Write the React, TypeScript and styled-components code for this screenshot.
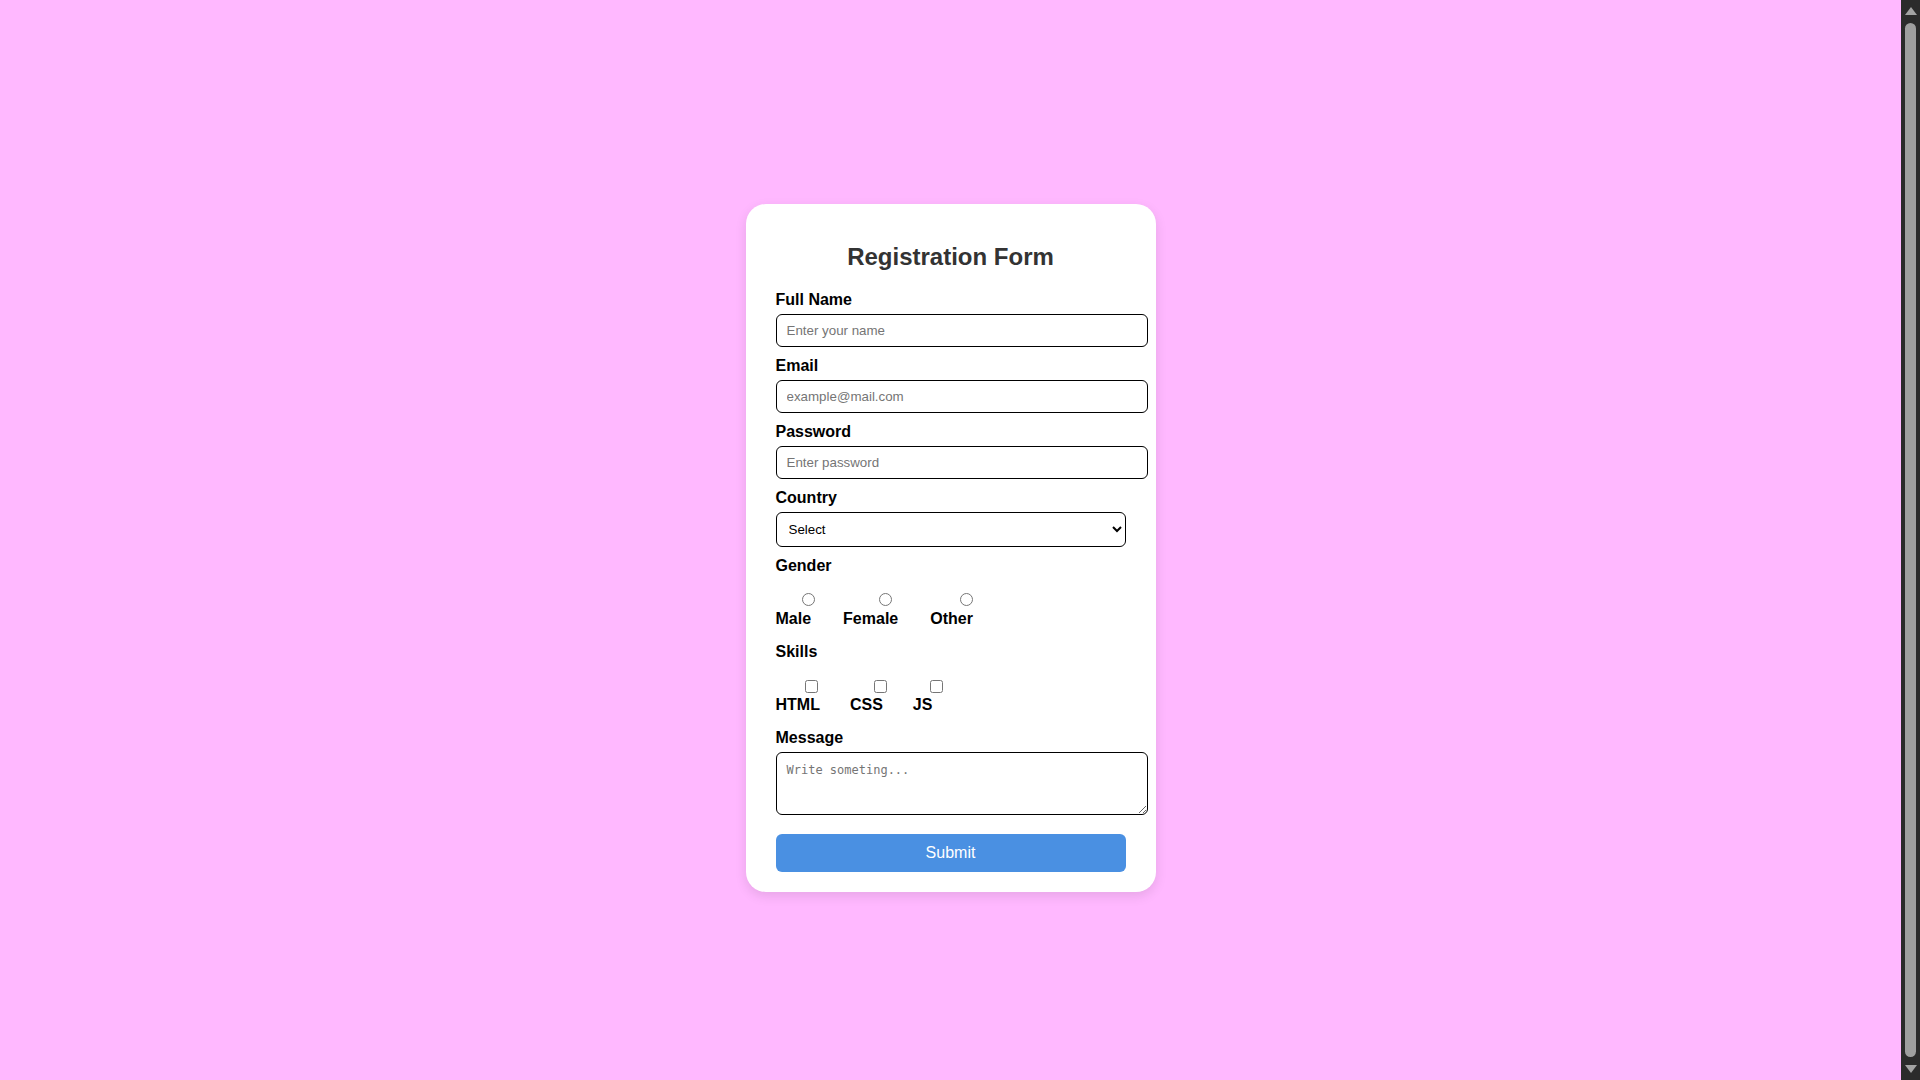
import { createGlobalStyle, styled } from 'styled-components'

const GlobalStyle = createGlobalStyle`
  body {
    margin: 8px 27px 8px 8px;
    height: 100vh;
    display: flex;
    align-items: center;
    justify-content: center;
    background: #ffb8ff;
    font-family: 'Liberation Sans', Arial, sans-serif;
  }
`

// page scrollbar as seen in the screenshot (body is 100vh + margins, so it overflows)
const ScrollTrack = styled.div`
  position: fixed;
  top: 0;
  right: 0;
  width: 19px;
  height: 100vh;
  display: flex;
  flex-direction: column;
  align-items: center;
  background: #2b2b2b;
`

const ScrollArrow = styled.svg`
  flex: none;
  width: 12px;
  height: 8px;
  margin: 7px 0;
`

const ScrollThumb = styled.div`
  flex: 1;
  width: 11px;
  margin: 1px 0;
  border-radius: 6px;
  background: #9f9f9f;
`

const Card = styled.form`
  width: 350px;
  padding: 20px 30px;
  background: #fff;
  border-radius: 20px;
  box-shadow: 0 4px 12px rgba(0, 0, 0, 0.1);
`

const Title = styled.h2`
  margin: 19px 0 20px;
  text-align: center;
  font-size: 24px;
  font-weight: bold;
  color: #333;
`

const FieldLabel = styled.label`
  display: block;
  margin-top: 10px;
  font-size: 16px;
  font-weight: bold;
  color: #000;
`

const TextInput = styled.input`
  display: block;
  box-sizing: content-box;
  width: 100%;
  margin: 5px 0 0;
  padding: 8px 10px;
  border: 1px solid #000;
  border-radius: 6px;
  font-family: 'Liberation Sans', Arial, sans-serif;
  font-size: 13.33px;
  color: #000;
  background: #fff;
  outline: none;
`

const Select = styled.select`
  display: block;
  box-sizing: border-box;
  width: 100%;
  margin: 5px 0 0;
  padding: 8px;
  border: 1px solid #000;
  border-radius: 6px;
  font-family: 'Liberation Sans', Arial, sans-serif;
  font-size: 13.33px;
  color: #000;
  background: #fff;
`

const OptionGroup = styled.div<{ $gap: number }>`
  display: flex;
  gap: ${({ $gap }) => $gap}px;
  padding-bottom: 5px;
`

const Option = styled.label`
  display: flex;
  flex-direction: column;
  align-items: flex-start;
  font-size: 16px;
  font-weight: bold;
  color: #000;
`

const Choice = styled.input<{ $shift: number; $top: number; $bottom: number }>`
  align-self: center;
  width: 13px;
  height: 13px;
  margin: ${({ $top }) => $top}px ${({ $shift }) => -$shift}px ${({ $bottom }) => $bottom}px
    ${({ $shift }) => $shift}px;
`

const MessageArea = styled.textarea`
  display: block;
  box-sizing: content-box;
  width: 100%;
  height: 41px;
  margin: 5px 0 0;
  padding: 10px;
  border: 1px solid #000;
  border-radius: 6px;
  font-family: 'DejaVu Sans Mono', monospace;
  font-size: 12px;
  color: #000;
  background: #fff;
  outline: none;
`

const SubmitButton = styled.button`
  display: block;
  width: 100%;
  margin-top: 18.5px;
  padding: 10px;
  border: none;
  border-radius: 6px;
  background: #4a90e2;
  color: #fff;
  font-family: 'Liberation Sans', Arial, sans-serif;
  font-size: 16px;
  cursor: pointer;
`

const genders = ['Male', 'Female', 'Other']
const skills = ['HTML', 'CSS', 'JS']

export default function App() {
  return (
    <>
      <GlobalStyle />
      <Card onSubmit={(e) => e.preventDefault()}>
        <Title>Registration Form</Title>

        <FieldLabel htmlFor="name">Full Name</FieldLabel>
        <TextInput id="name" type="text" placeholder="Enter your name" />

        <FieldLabel htmlFor="email">Email</FieldLabel>
        <TextInput id="email" type="email" placeholder="example@mail.com" />

        <FieldLabel htmlFor="password">Password</FieldLabel>
        <TextInput id="password" type="password" placeholder="Enter password" />

        <FieldLabel htmlFor="country">Country</FieldLabel>
        <Select id="country" defaultValue="">
          <option value="">Select</option>
          <option value="in">India</option>
          <option value="us">USA</option>
          <option value="uk">UK</option>
        </Select>

        <FieldLabel>Gender</FieldLabel>
        <OptionGroup $gap={32}>
          {genders.map((g) => (
            <Option key={g}>
              <Choice type="radio" name="gender" value={g} $shift={15} $top={18} $bottom={3.5} />
              {g}
            </Option>
          ))}
        </OptionGroup>

        <FieldLabel>Skills</FieldLabel>
        <OptionGroup $gap={30}>
          {skills.map((s) => (
            <Option key={s}>
              <Choice type="checkbox" value={s} $shift={14} $top={19} $bottom={3.5} />
              {s}
            </Option>
          ))}
        </OptionGroup>

        <FieldLabel htmlFor="message">Message</FieldLabel>
        <MessageArea id="message" placeholder="Write someting..." />

        <SubmitButton type="submit">Submit</SubmitButton>
      </Card>

      <ScrollTrack aria-hidden>
        <ScrollArrow viewBox="0 0 12 8">
          <path d="M6 0 L12 8 L0 8 Z" fill="#a3a3a3" />
        </ScrollArrow>
        <ScrollThumb />
        <ScrollArrow viewBox="0 0 12 8">
          <path d="M0 0 L12 0 L6 8 Z" fill="#a3a3a3" />
        </ScrollArrow>
      </ScrollTrack>
    </>
  )
}
